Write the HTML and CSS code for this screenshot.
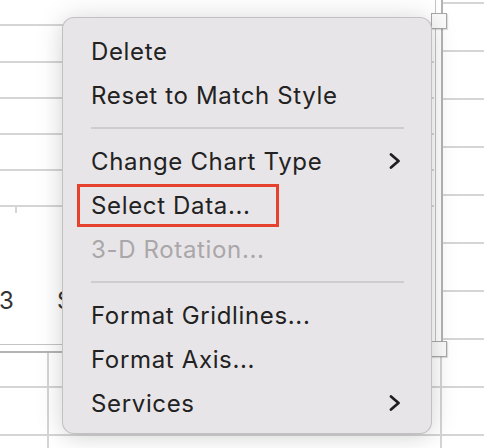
FILE: index.html
```html
<!DOCTYPE html>
<html>
<head>
<meta charset="utf-8">
<link rel="stylesheet" href="styles.css">
</head>
<body>
<div class="stage">
  <svg class="sheet" width="484" height="448" viewBox="0 0 484 448">
    <g stroke="#d5d5d5" stroke-width="2">
      <line x1="0" y1="25" x2="434" y2="25"/>
      <line x1="0" y1="62" x2="434" y2="62"/>
      <line x1="0" y1="98" x2="434" y2="98"/>
      <line x1="0" y1="134" x2="434" y2="134"/>
      <line x1="0" y1="170" x2="434" y2="170"/>
      <line x1="0" y1="206" x2="434" y2="206"/>
      <line x1="16" y1="206" x2="16" y2="213"/>
      <line x1="443" y1="3" x2="484" y2="3"/>
      <line x1="443" y1="51" x2="484" y2="51"/>
      <line x1="443" y1="99" x2="484" y2="99"/>
      <line x1="443" y1="147" x2="484" y2="147"/>
      <line x1="443" y1="195" x2="484" y2="195"/>
      <line x1="443" y1="243" x2="484" y2="243"/>
      <line x1="443" y1="291" x2="484" y2="291"/>
      <line x1="443" y1="339" x2="484" y2="339"/>
      <line x1="0" y1="387" x2="484" y2="387"/>
      <line x1="0" y1="435" x2="484" y2="435"/>
      <line x1="48" y1="353" x2="48" y2="448"/>
      <line x1="441" y1="353" x2="441" y2="448"/>
    </g>
    <line x1="0" y1="344.5" x2="436" y2="344.5" stroke="#c4c4c4" stroke-width="1"/>
    <line x1="0" y1="352" x2="443" y2="352" stroke="#b4b4b4" stroke-width="2"/>
    <line x1="435.5" y1="0" x2="435.5" y2="345" stroke="#c4c4c4" stroke-width="1"/>
    <line x1="442" y1="0" x2="442" y2="353" stroke="#b4b4b4" stroke-width="2"/>
    <text x="-1" y="309" class="axis">3</text>
    <text x="57" y="309" class="axis">S</text>
  </svg>
  <div class="handle handle-top"></div>
  <div class="handle handle-bottom"></div>

  <div class="menu">
    <div class="item">Delete</div>
    <div class="item">Reset to Match Style</div>
    <div class="sep"></div>
    <div class="item">Change Chart Type<svg class="chev" width="12" height="16" viewBox="0 0 12 16"><path d="M2 1.5 L9.5 8 L2 14.5" fill="none" stroke="#1e1e1e" stroke-width="2.7" stroke-linecap="round" stroke-linejoin="round"/></svg></div>
    <div class="item highlighted">Select Data...</div>
    <div class="item disabled">3-D Rotation...</div>
    <div class="sep"></div>
    <div class="item">Format Gridlines...</div>
    <div class="item">Format Axis...</div>
    <div class="item">Services<svg class="chev" width="12" height="16" viewBox="0 0 12 16"><path d="M2 1.5 L9.5 8 L2 14.5" fill="none" stroke="#1e1e1e" stroke-width="2.7" stroke-linecap="round" stroke-linejoin="round"/></svg></div>
  </div>
</div>
</body>
</html>
```

FILE: styles.css
```css
html, body {
  margin: 0;
  padding: 0;
  background: #ffffff;
}

.stage {
  position: relative;
  width: 484px;
  height: 448px;
  overflow: hidden;
  background: #ffffff;
  font-family: Inter, "Noto Sans", "DejaVu Sans", sans-serif;
}

.sheet {
  display: block;
}

.axis {
  font-family: Inter, "Noto Sans", sans-serif;
  font-size: 24px;
  fill: #333333;
}

.handle {
  position: absolute;
  left: 431px;
  width: 14px;
  height: 14px;
  background: #fafafa;
  border: 1px solid #a8a8a8;
  box-shadow: 1px 1px 1px rgba(0,0,0,0.12);
}

.handle-top {
  top: 13px;
}

.handle-bottom {
  top: 341px;
}

.menu {
  position: absolute;
  left: 62px;
  top: 17px;
  width: 370px;
  height: 417px;
  box-sizing: border-box;
  padding: 11px 0 10px 0;
  background: #e8e5e8;
  border: 1px solid rgba(0,0,0,0.16);
  border-radius: 12px;
  box-shadow: 0 0 28px rgba(0,0,0,0.13), 0 6px 20px rgba(0,0,0,0.06);
  display: flex;
  flex-direction: column;
}

.item {
  position: relative;
  height: 44px;
  flex: none;
  display: flex;
  align-items: center;
  justify-content: space-between;
  padding: 0 30px 0 28px;
  font-size: 24px;
  color: #222222;
  letter-spacing: 0.65px;
  white-space: nowrap;
}

.item.disabled {
  color: #a9a7a9;
}

.item.highlighted::after {
  content: "";
  position: absolute;
  left: 14px;
  top: 1px;
  width: 202px;
  height: 43px;
  box-sizing: border-box;
  border: 3px solid #e6412c;
}

.chev {
  display: block;
}

.sep {
  height: 22px;
  flex: none;
  display: flex;
  align-items: center;
  padding: 0 27px 0 28px;
}

.sep::before {
  content: "";
  display: block;
  flex: 1;
  height: 2px;
  background: #cfcccf;
}
```
